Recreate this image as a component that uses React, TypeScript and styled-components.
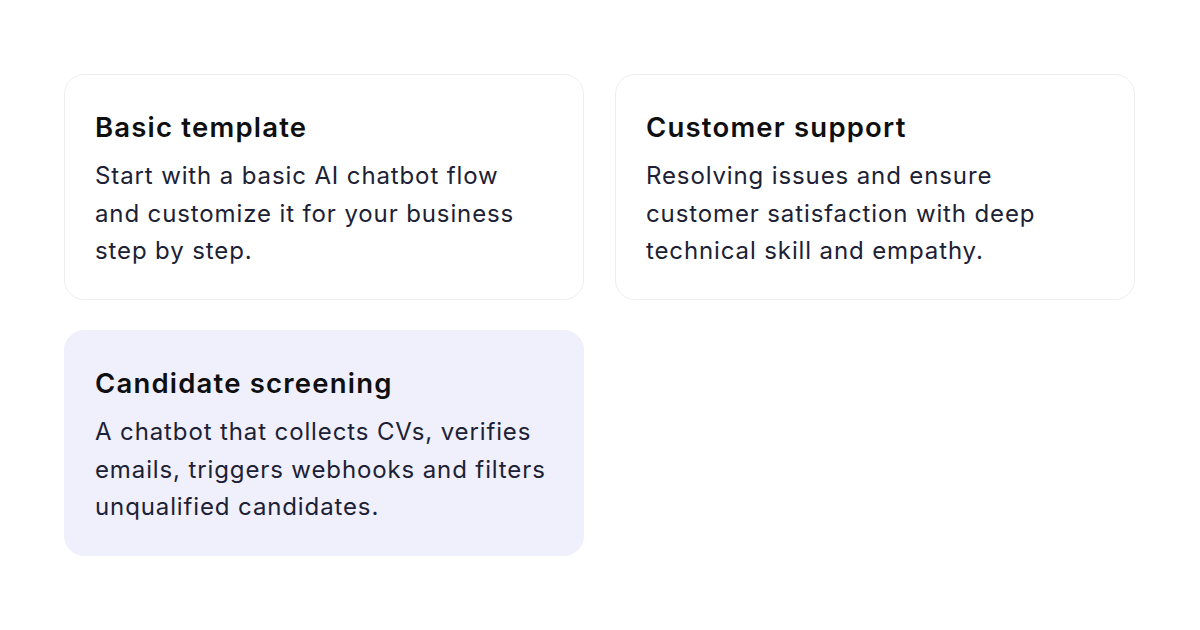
import React from "react";
import styled, { createGlobalStyle } from "styled-components";

const Global = createGlobalStyle`
  html, body { margin: 0; padding: 0; background: #ffffff; }
  body { font-family: "Inter", sans-serif; -webkit-font-smoothing: antialiased; }
`;

const Page = styled.div`
  width: 1200px;
  height: 630px;
  box-sizing: border-box;
  padding: 74px 64px 0 64px;
  background: #ffffff;
`;

const Grid = styled.div`
  display: grid;
  grid-template-columns: 520px 520px;
  grid-auto-rows: 226px;
  column-gap: 31px;
  row-gap: 30px;
`;

const Card = styled.div<{ $active?: boolean }>`
  box-sizing: border-box;
  border-radius: 20px;
  padding: 34px 30px 30px 30px;
  background: ${(p) => (p.$active ? "#f0effc" : "#ffffff")};
  border: 1px solid ${(p) => (p.$active ? "#f0effc" : "#eeeeee")};
  display: flex;
  flex-direction: column;
  gap: 12px;
`;

const Title = styled.h3`
  margin: 0;
  font-family: "Inter", sans-serif;
  font-weight: 600;
  font-size: 27.5px;
  line-height: 36px;
  color: #0f0f10;
  letter-spacing: 1.2px;
`;

const Text = styled.p`
  margin: 0;
  max-width: 456px;
  font-family: "Inter", sans-serif;
  font-weight: 400;
  font-size: 24px;
  line-height: 37.5px;
  color: #1c2135;
  letter-spacing: 0.88px;
`;

const items = [
  {
    title: "Basic template",
    text: "Start with a basic AI chatbot flow and customize it for your business step by step.",
  },
  {
    title: "Customer support",
    text: "Resolving issues and ensure customer satisfaction with deep technical skill and empathy.",
  },
  {
    title: "Candidate screening",
    text: "A chatbot that collects CVs, verifies emails, triggers webhooks and filters unqualified candidates.",
    active: true,
  },
];

export default function App() {
  return (
    <>
      <Global />
      <Page>
        <Grid>
          {items.map((it) => (
            <Card key={it.title} $active={it.active}>
              <Title>{it.title}</Title>
              <Text>{it.text}</Text>
            </Card>
          ))}
        </Grid>
      </Page>
    </>
  );
}
